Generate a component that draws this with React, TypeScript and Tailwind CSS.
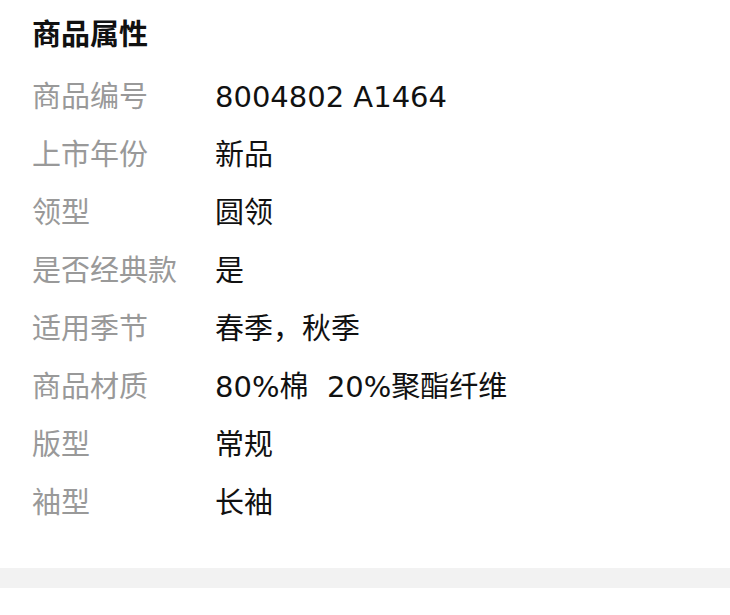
const rows: [string, string][] = [
  ['商品编号', '8004802 A1464'],
  ['上市年份', '新品'],
  ['领型', '圆领'],
  ['是否经典款', '是'],
  ['适用季节', '春季，秋季'],
  ['商品材质', '80%棉  20%聚酯纤维'],
  ['版型', '常规'],
  ['袖型', '长袖'],
];

export default function App() {
  return (
    <div className="w-[730px] h-[615px] bg-white font-['DejaVu_Sans','Noto_Sans_CJK_SC',sans-serif]">
      <div className="px-[32px] pt-[12px] pb-[35px]">
        <h2 className="text-[29px] leading-[40px] font-bold text-[#111] font-['Noto_Sans_CJK_SC',sans-serif]">商品属性</h2>
        <div className="mt-[17px] flex flex-col">
          {rows.map(([label, value]) => (
            <div key={label} className="flex h-[58px] items-center text-[29px]">
              <span className="w-[183px] shrink-0 text-[#999]">{label}</span>
              <span className="text-[#111] whitespace-pre">{value}</span>
            </div>
          ))}
        </div>
      </div>
      <div className="h-[20px] bg-[#f2f2f2]" />
    </div>
  );
}
